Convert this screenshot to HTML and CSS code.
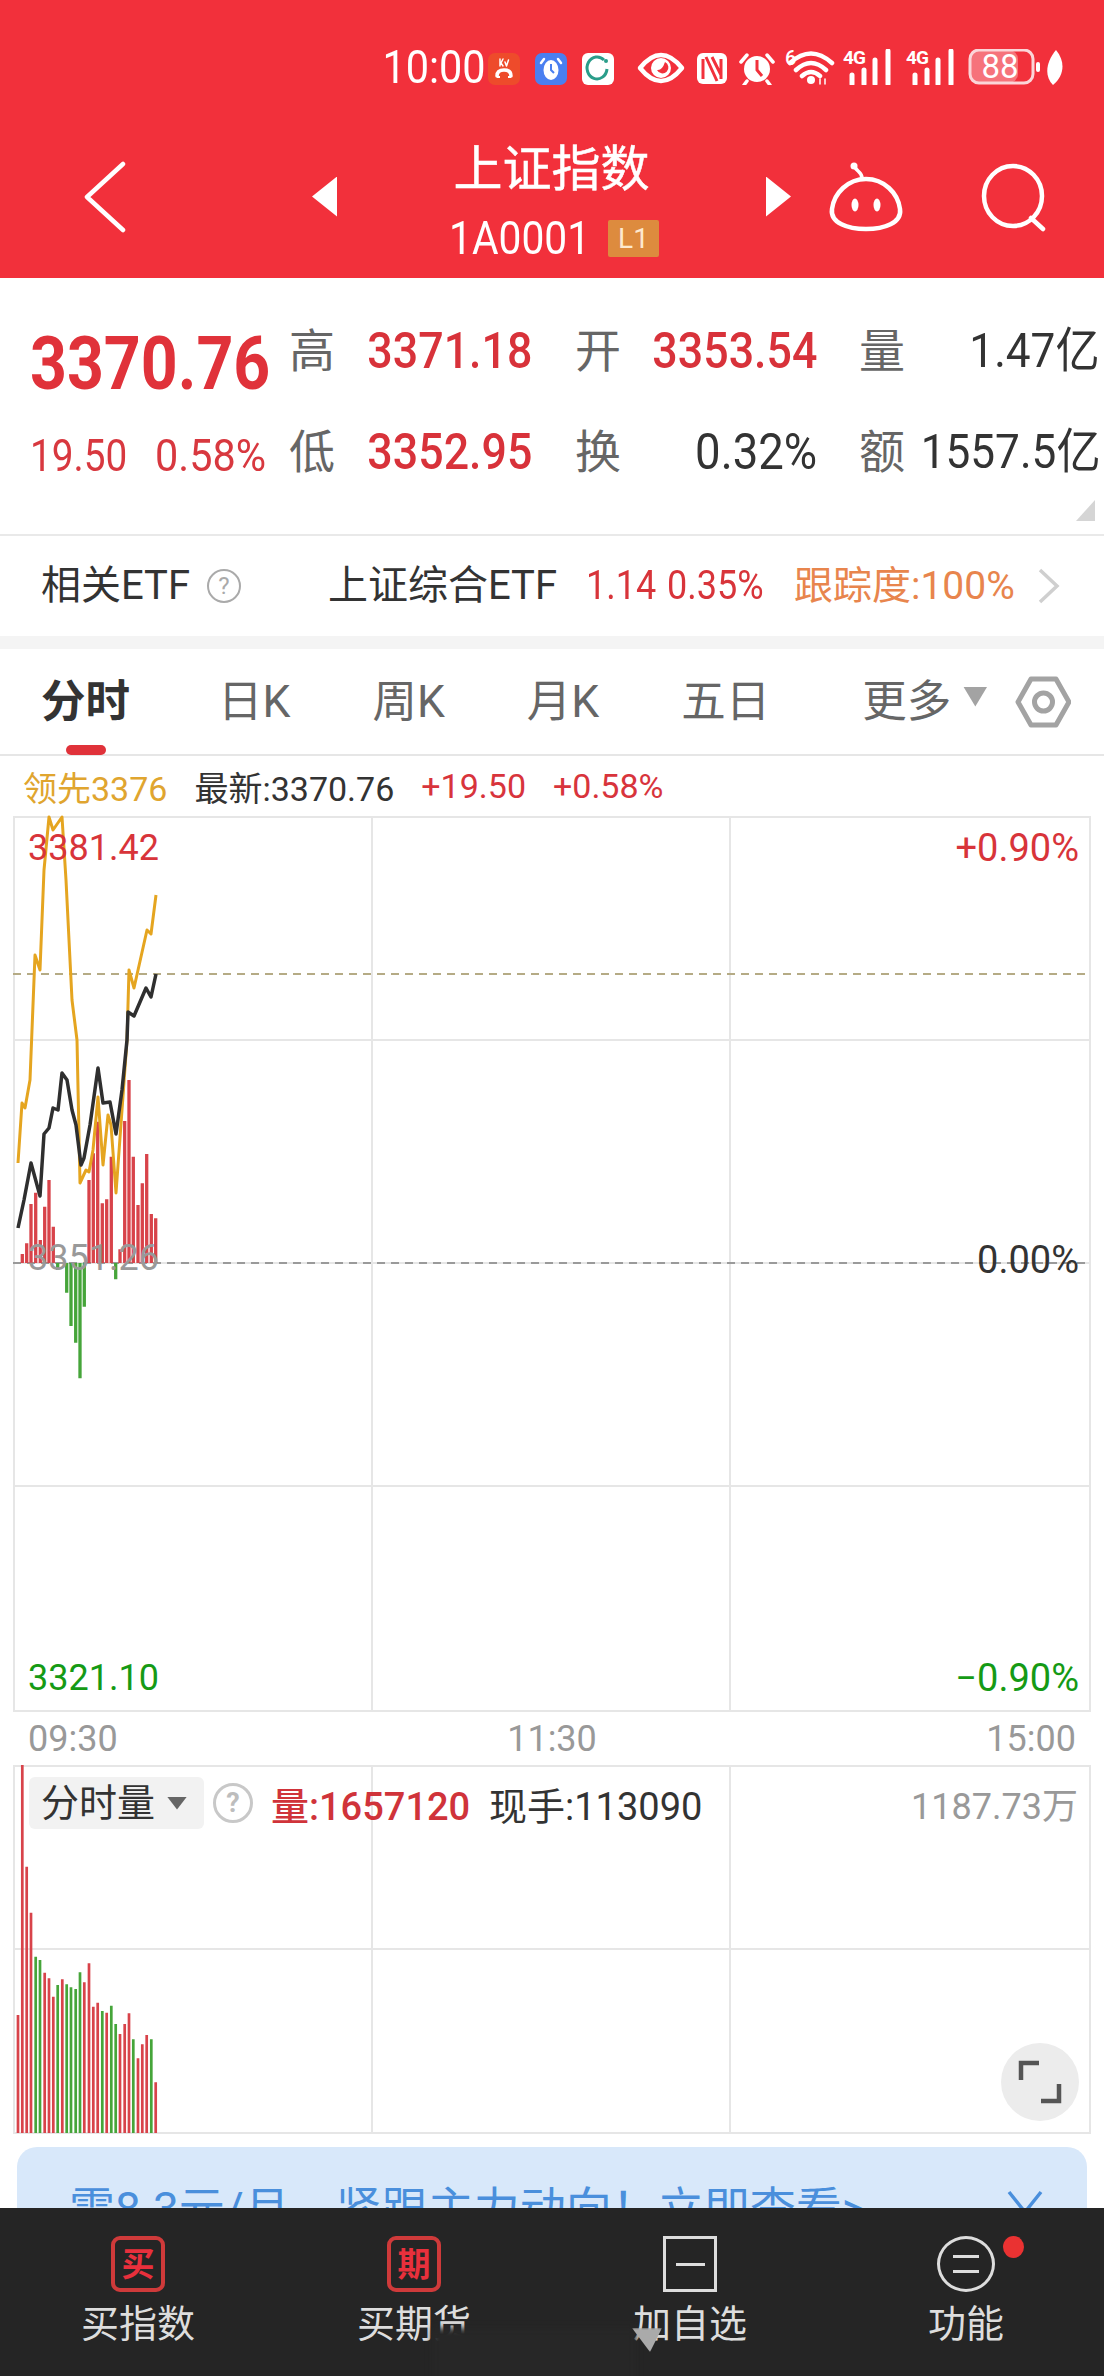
FILE: index.html
```html
<!DOCTYPE html>
<html lang="zh-CN">
<head>
<meta charset="utf-8">
<title>上证指数</title>
<link rel="stylesheet" href="styles.css">
</head>
<body>
<div class="page">
  <header class="top">
    <div class="status">
      <span class="time">10:00</span>
      <svg class="status-icons" width="575" height="36" viewBox="488 49 575 36">
        <rect x="488" y="53" width="32" height="32" rx="7" class="i-orange"/>
        <path d="M497 76q0-6 7-6t7 6" class="i-line-w3"/>
        <path d="M497 76v2h3v-2zM508 76v2h3v-2z" class="i-white"/>
        <path d="M500 59v7M503 59l-2 4 2 3M505 62l1.500 4 2-6" class="i-line-w1"/>
        <rect x="535" y="53" width="32" height="32" rx="7" class="i-blue"/>
        <ellipse cx="551" cy="70" rx="7.500" ry="10" class="i-white"/>
        <path d="M544 59l-3 4M558 59l3 4" class="i-line-w2"/>
        <path d="M551 64v6l3 3" class="i-line-blue"/>
        <rect x="582" y="53" width="32" height="32" rx="6" class="i-white"/>
        <path d="M604 60a10 11 0 1 0 3 9" class="i-teal"/>
        <circle cx="606" cy="61" r="2" class="i-teal-fill"/>
        <path d="M640 68Q661 42 682 68Q661 94 640 68Z" class="i-line-w4"/>
        <circle cx="661" cy="68" r="10" class="i-white"/>
        <path d="M665 62a6 6 0 1 1-8 8q5 1 8-8z" class="i-red"/>
        <rect x="697" y="53" width="30" height="31" rx="6" class="i-white"/>
        <path d="M703 59v20M721 59v20M706 57l11 24M712 57l9 18" class="i-line-red"/>
        <circle cx="757" cy="69" r="13" class="i-white"/>
        <path d="M741 62l6-7M773 62l-6-7M747 81l-3 4M767 81l3 4" class="i-line-w3"/>
        <path d="M757 60v10l5 6" class="i-line-red"/>
        <text x="785" y="65" class="t-six">6</text>
        <path d="M790 63Q811 44 832 63M796 70Q811 56 826 70M802 76Q811 68 820 76" class="i-line-w4"/>
        <circle cx="811" cy="80" r="4" class="i-white"/>
        <path d="M820 84v-5M825 84v-5" class="i-line-w1"/>
        <text x="843" y="64" class="t-4g">4G</text>
        <path d="M852 84v-9M864 84v-14M875 84v-24M888 84v-33" class="i-bar"/>
        <text x="906" y="64" class="t-4g">4G</text>
        <path d="M915 84v-9M927 84v-14M938 84v-24M951 84v-33" class="i-bar"/>
        <rect x="970" y="50" width="48" height="33" rx="9" class="i-batt-fill"/>
        <rect x="970" y="50" width="63" height="33" rx="9" class="i-batt"/>
        <text x="1000" y="78" class="t-batt">88</text>
        <rect x="1036" y="62" width="4" height="10" rx="2" class="i-white"/>
        <path d="M1056 50C1046 62 1044 76 1053 85C1064 76 1066 62 1056 50Z" class="i-white"/>
      </svg>
    </div>
    <nav class="nav">
      <svg class="nav-back" width="44" height="72" viewBox="83 160 44 72"><path d="M123 163L87 196L123 229" class="i-line-w5"/></svg>
      <span class="tri tri-left"></span>
      <div class="title-block">
        <h1 class="title">上证指数</h1>
        <div class="sub"><span class="code">1A0001</span><span class="level">L1</span></div>
      </div>
      <span class="tri tri-right"></span>
      <svg class="nav-robot" width="76" height="72" viewBox="828 162 76 72">
        <path d="M866 180C848 180 834 194 832 210C830 224 848 230 866 230C884 230 902 224 900 210C898 194 884 180 866 180Z" class="i-line-w4"/>
        <path d="M862 179C862 173 856 172 855 168" class="i-line-w3"/>
        <circle cx="854" cy="167" r="3.500" class="i-white"/>
        <ellipse cx="855" cy="206" rx="3.500" ry="6.500" class="i-white"/>
        <ellipse cx="877" cy="206" rx="3.500" ry="6.500" class="i-white"/>
      </svg>
      <svg class="nav-search" width="68" height="70" viewBox="978 164 68 70">
        <ellipse cx="1013" cy="198" rx="29" ry="30" class="i-line-w4"/>
        <path d="M1031 220L1043 231" class="i-line-w4"/>
      </svg>
    </nav>
  </header>

  <section class="quote">
    <div class="price"><span class="price-num">3370.76</span></div>
    <span class="lbl">高</span><span class="val"><b class="v v-red">3371.18</b></span>
    <span class="lbl">开</span><span class="val"><b class="v v-red">3353.54</b></span>
    <span class="lbl">量</span><span class="val"><b class="v v-dark">1.47亿</b></span>
    <div class="chg"><span class="chg-a">19.50</span><span class="chg-b">0.58%</span></div>
    <span class="lbl">低</span><span class="val"><b class="v v-red">3352.95</b></span>
    <span class="lbl">换</span><span class="val"><b class="v v-dark v-pct">0.32%</b></span>
    <span class="lbl">额</span><span class="val"><b class="v v-dark">1557.5亿</b></span>
    <span class="corner"></span>
  </section>

  <section class="etf">
    <span class="etf-name">相关ETF</span>
    <svg class="etf-q" width="36" height="36" viewBox="0 0 36 36"><circle cx="18" cy="18" r="16" class="q-ring"/><text x="18" y="26" class="q-mark">?</text></svg>
    <span class="etf-fund">上证综合ETF</span>
    <span class="etf-num etf-price">1.14</span>
    <span class="etf-num etf-rate">0.35%</span>
    <span class="etf-track">跟踪度:100%</span>
    <svg class="etf-more" width="22" height="36" viewBox="0 0 22 36"><path d="M2 2L19 18L2 34" class="q-chev"/></svg>
  </section>
  <div class="band"></div>

  <section class="tabs">
    <span class="tab tab-active">分时</span>
    <span class="tab">日K</span>
    <span class="tab">周K</span>
    <span class="tab">月K</span>
    <span class="tab">五日</span>
    <span class="tab tab-more">更多</span>
    <span class="tab-tri"></span>
    <svg class="hex" width="56" height="52" viewBox="1010 677 56 52">
      <path d="M1013 703L1026 680H1051L1064 703L1051 726H1026Z" class="hex-line"/>
      <circle cx="1038.500" cy="703" r="9" class="hex-line"/>
    </svg>
    <span class="tab-mark"></span>
  </section>

  <section class="readout">
    <span class="lead">领先3376</span>
    <span class="dark">最新:3370.76</span>
    <span class="red">+19.50</span>
    <span class="red">+0.58%</span>
  </section>

  <section class="chart">
    <div class="cell"></div><div class="cell"></div><div class="cell"></div>
    <div class="cell"></div><div class="cell"></div><div class="cell"></div>
    <div class="cell"></div><div class="cell"></div><div class="cell"></div>
    <div class="cell"></div><div class="cell"></div><div class="cell"></div>
    <svg class="plot" viewBox="13 816 1078 896">
      <path d="M13 974H1090" class="dash-tan"/>
      <path d="M13 1263H1090" class="dash-gray"/>
      <path class="bar-red" d="M22.300 1263V1254M26.700 1263V1243.300M31 1263V1204M35.700 1263V1192.700M40.300 1263V1240M44.700 1263V1206.700M49 1263V1180M53.300 1263V1226.700M89 1263V1180M93.300 1263V1153.300M97.700 1263V1121.700M102.300 1263V1203.300M106.700 1263V1199.300M111.300 1263V1156.700M120 1263V1249.300M124.700 1263V1121M129 1263V1080M133.300 1263V1156.700M138 1263V1205M142.300 1263V1183.300M146.700 1263V1154M151.300 1263V1214M155.700 1263V1218.300"/>
      <path class="bar-green" d="M57.700 1263V1270M66.700 1263V1292.700M71 1263V1326M75.700 1263V1342.700M80 1263V1378.300M84.300 1263V1306.700M115.700 1263V1279.300"/>
      <polyline class="line-gold" points="18,1163 22,1103 25,1108 30,1080 32,1030 35,955 40,970 44,870 49,817 53,830 62,817 66,880 72,1000 77,1040 80,1183 86,1170 89,1172 93,1150 98,1097 103,1165 108,1115 111,1125 116,1193 122,1110 127,1040 129,970 134,988 147,930 151,934 156,895"/>
      <polyline class="line-black" points="18,1228 24,1200 31,1163 40,1196 44,1134 49,1128 53,1108 58,1110 62,1073 67,1080 72,1110 76,1125 81,1165 84,1158 90,1125 98,1068 103,1103 110,1102 116,1134 122,1090 127,1040 128,1012 134,1016 146,988 151,997 156,974"/>
    </svg>
    <span class="axis ax-top-l">3381.42</span>
    <span class="axis ax-top-r">+0.90%</span>
    <span class="axis ax-mid-l">3351.26</span>
    <span class="axis ax-mid-r">0.00%</span>
    <span class="axis ax-bot-l">3321.10</span>
    <span class="axis ax-bot-r">−0.90%</span>
  </section>

  <section class="times"><span>09:30</span><span>11:30</span><span>15:00</span></section>

  <section class="volume">
    <div class="cell"></div><div class="cell"></div><div class="cell"></div>
    <div class="cell"></div><div class="cell"></div><div class="cell"></div>
    <svg class="plot" viewBox="13 1765 1078 369">
      <path class="vbar-red" d="M18 2133V2015M22.300 2133V1765M26.700 2133V1866.700M31 2133V1912.700M44.700 2133V1972.700M49 2133V1978.300M53.300 2133V1996.700M62.300 2133V1979.300M84.300 2133V1982.300M89 2133V1963.300M93.300 2133V2006.700M97.700 2133V2002.700M106.700 2133V2012.700M120 2133V2034M124.700 2133V2024M129 2133V2013.300M138 2133V2058.300M142.300 2133V2044.300M146.700 2133V2035M155.700 2133V2082.300"/>
      <path class="vbar-green" d="M35.700 2133V1956.700M40 2133V1960M57.700 2133V1985M66.700 2133V1984.300M71 2133V1987.300M75.700 2133V1989M80 2133V1972.300M102.300 2133V2011M111.300 2133V2005.700M115.700 2133V2024M133.300 2133V2039.300M151.300 2133V2039.300"/>
    </svg>
    <div class="vol-head">
      <span class="chip">分时量<i class="chip-tri"></i></span>
      <svg class="vol-q" width="42" height="42" viewBox="0 0 42 42"><circle cx="21" cy="21" r="18.500" class="q-ring-b"/><text x="21" y="30" class="q-mark-b">?</text></svg>
      <span class="vol-now">量:1657120</span>
      <span class="vol-hand">现手:113090</span>
      <span class="vol-max">1187.73万</span>
    </div>
    <div class="expand">
      <svg width="44" height="44" viewBox="0 0 44 44"><path d="M3 20V3H21M41 24V41H23" class="expand-line"/></svg>
    </div>
  </section>

  <aside class="banner">
    <span class="banner-text">需8.3元/月，紧跟主力动向！立即查看&gt;</span>
    <svg class="banner-x" width="36" height="30" viewBox="0 0 36 30"><path d="M2 2L18 22L34 2M18 22V30" class="banner-line"/></svg>
  </aside>

  <footer class="bottom">
    <div class="item">
      <span class="box box-red">买</span>
      <span class="item-label">买指数</span>
    </div>
    <div class="item">
      <span class="box box-red box-up">期</span>
      <span class="item-label">买期货</span>
    </div>
    <div class="item">
      <span class="box box-plain"><i class="dash"></i></span>
      <span class="item-label">加自选</span>
    </div>
    <div class="item">
      <span class="circle"><i class="dash-s"></i><i class="dash-s"></i><i class="dot"></i></span>
      <span class="item-label">功能</span>
    </div>
    <div class="smudge"></div>
    <div class="smudge-tip"></div>
  </footer>
</div>
</body>
</html>
```

FILE: styles.css
```css
* { box-sizing: border-box; }
html, body { margin: 0; padding: 0; background: #fff; }
body { font-family: Roboto, "Noto Sans CJK SC", sans-serif; color: #333; }
.page { position: relative; width: 1104px; height: 2376px; overflow: hidden; background: #fff; }
i, b { font-style: normal; font-weight: inherit; }

/* header */
.top { height: 278px; background: #f2303b; color: #fff; padding-top: 49px; }
.status { display: flex; justify-content: flex-end; align-items: center; gap: 12px; height: 36px; padding-right: 41px; }
.status-icons { display: block; flex: none; }
.time { width: 104px; font-size: 46px; line-height: 36px; white-space: nowrap; transform: scaleX(.9); transform-origin: right center; text-align: right; direction: ltr; }
.i-white { fill: #fff; }
.i-orange { fill: #ee4b2b; }
.i-blue { fill: #4a7ff0; }
.i-red { fill: #f2303b; }
.i-teal { fill: none; stroke: #2a9d8a; stroke-width: 3; }
.i-teal-fill { fill: #2a9d8a; }
.i-line-w1, .i-line-w2, .i-line-w3, .i-line-w4, .i-line-w5 { fill: none; stroke: #fff; stroke-linecap: round; stroke-linejoin: round; }
.i-line-w1 { stroke-width: 1.500; }
.i-line-w2 { stroke-width: 2.500; }
.i-line-w3 { stroke-width: 3.500; }
.i-line-w4 { stroke-width: 4.500; }
.i-line-w5 { stroke-width: 4.500; }
.i-line-blue { fill: none; stroke: #4a7ff0; stroke-width: 2; }
.i-line-red { fill: none; stroke: #f2303b; stroke-width: 3; }
.i-bar { fill: none; stroke: #fff; stroke-width: 5; stroke-linecap: round; }
.i-batt { fill: none; stroke: #fbd5d8; stroke-width: 3; }
.i-batt-fill { fill: #f6737b; }
.t-six { fill: #fff; font-size: 20px; font-weight: 500; }
.t-4g { fill: #fff; font-size: 19px; font-weight: 700; letter-spacing: -1px; }
.t-batt { fill: #fff; font-size: 33px; text-anchor: middle; }

.nav { display: flex; align-items: center; margin-top: 57px; height: 115px; padding-left: 83px; }
.nav-back { flex: none; display: block; margin-top: -6px; }
.tri { flex: none; width: 25px; height: 40px; background: #fff; }
.tri-left { margin-left: 185px; margin-top: -6px; clip-path: polygon(100% 0, 100% 100%, 0 50%); }
.tri-right { margin-top: -6px; clip-path: polygon(0 0, 100% 50%, 0 100%); }
.title-block { flex: none; width: 429px; display: flex; flex-direction: column; align-items: center; }
.title { margin: 0; font-size: 49px; line-height: 56px; font-weight: 400; -webkit-text-stroke: .5px #fff; }
.sub { display: flex; align-items: center; height: 37px; margin-top: 22px; padding-left: 5px; }
.code { width: 141px; font-size: 46px; line-height: 37px; white-space: nowrap; transform: scaleX(.886); transform-origin: left center; }
.level { width: 51px; height: 37px; margin-left: 18px; background: #dd8b3e; color: #fde9cf; font-size: 28px; line-height: 37px; text-align: center; border-radius: 2px; }
.nav-robot { flex: none; display: block; margin-left: 37px; margin-top: -6px; }
.nav-search { flex: none; display: block; margin-left: 74px; margin-top: -6px; }

/* quote */
.quote { position: relative; height: 258px; padding: 22px 4px 0 30px; border-bottom: 2px solid #e9e9e9; display: grid;
  grid-template-columns: 259px 45px 198px 43px 45px 197px 42px 46px 195px; grid-template-rows: 101px 101px; align-items: center; }
.lbl { grid-column: auto; font-size: 46px; line-height: 50px; color: #666; }
.lbl:nth-of-type(n) { width: 46px; }
.val { display: block; text-align: right; white-space: nowrap; }
.quote > .lbl:nth-child(4), .quote > .lbl:nth-child(11) { grid-column: 5; }
.quote > .lbl:nth-child(6), .quote > .lbl:nth-child(13) { grid-column: 8; }
.v { display: inline-block; font-size: 50px; line-height: 50px; transform: scaleX(.895); transform-origin: right center; }
.v-red { color: #d8323a; font-weight: 500; }
.v-dark { color: #333; font-size: 48px; transform: scaleX(.92); }
.v-pct { font-size: 50px; transform: scaleX(.91); }
.price { padding-top: 26px; color: #e0323a; white-space: nowrap; }
.price-num { display: inline-block; font-size: 74px; line-height: 74px; font-weight: 700; transform: scaleX(.87); transform-origin: left center; }
.chg { display: flex; padding-top: 8px; color: #d8383f; white-space: nowrap; }
.chg-a, .chg-b { display: block; font-size: 45px; line-height: 50px; transform-origin: left center; }
.chg-a { width: 125px; transform: scaleX(.86); }
.chg-b { transform: scaleX(.92); }
.corner { position: absolute; left: 1076px; top: 222px; width: 19px; height: 21px; background: #d5d5d5; clip-path: polygon(100% 0, 100% 100%, 0 100%); }

/* etf */
.etf { display: flex; align-items: center; height: 100px; padding-left: 41px; white-space: nowrap; }
.etf-name, .etf-fund { font-size: 40px; line-height: 44px; color: #333; }
.etf-name { width: 148px; }
.etf-q { display: block; flex: none; margin-left: 17px; }
.q-ring { fill: none; stroke: #aaa; stroke-width: 2; }
.q-mark { fill: #aaa; font-size: 24px; text-anchor: middle; }
.etf-fund { width: 228px; margin-left: 86px; }
.etf-num { display: block; font-size: 40px; line-height: 44px; color: #d8343a; transform: scaleX(.9); transform-origin: left center; }
.etf-price { width: 81px; margin-left: 30px; }
.etf-rate { width: 127px; }
.etf-track { width: 244px; font-size: 39px; line-height: 44px; color: #e8854d; }
.etf-more { display: block; flex: none; }
.q-chev { fill: none; stroke: #cfcfcf; stroke-width: 3.500; }
.band { height: 13px; background: #f4f4f4; }

/* tabs */
.tabs { position: relative; display: flex; align-items: center; gap: 82px; height: 107px; padding-left: 41px; border-bottom: 2px solid #e6e6e6; }
.tab { font-size: 44.500px; line-height: 50px; color: #666; white-space: nowrap; }
.tab-active { color: #333; font-weight: 700; margin-right: 6px; }
.tab-more { margin-left: 10px; }
.tab-tri { width: 24px; height: 20px; margin: -10px 0 0 -70px; background: #a3a3a3; clip-path: polygon(0 0, 100% 0, 50% 100%); }
.hex { display: block; flex: none; margin-left: -54px; }
.hex-line { fill: none; stroke: #a3a3a3; stroke-width: 5; stroke-linejoin: round; }
.tab-mark { position: absolute; left: 66px; bottom: -1px; width: 40px; height: 10px; border-radius: 5px; background: #e0323a; }

/* readout */
.readout { display: flex; align-items: center; gap: 27px; height: 60px; padding-left: 23px; font-size: 34px; white-space: nowrap; }
.lead { color: #e0a52f; }
.dark { color: #333; }
.red { color: #d8343c; }

/* chart grids */
.chart, .volume { position: relative; display: grid; grid-template-columns: repeat(3, 1fr); margin-left: 13px; width: 1078px; border: 2px solid #e6e6e6; }
.chart { height: 896px; grid-template-rows: repeat(4, 1fr); }
.volume { height: 369px; grid-template-rows: repeat(2, 1fr); }
.cell { border-right: 2px solid #e6e6e6; border-bottom: 2px solid #e6e6e6; }
.cell:nth-child(3n) { border-right: 0; }
.chart .cell:nth-child(n+10), .volume .cell:nth-child(n+4) { border-bottom: 0; }
.plot { position: absolute; left: -2px; top: -2px; width: 1078px; height: 100%; overflow: visible; }
.chart .plot { height: 896px; }
.volume .plot { height: 369px; }
.dash-tan, .dash-gray { fill: none; stroke-width: 2; stroke-dasharray: 8 6; }
.dash-tan { stroke: #b5ab85; }
.dash-gray { stroke: #9a9a9a; }
.bar-red, .bar-green, .vbar-red, .vbar-green { fill: none; }
.bar-red, .bar-green { stroke-width: 3.300; }
.vbar-red, .vbar-green { stroke-width: 2.700; }
.bar-red, .vbar-red { stroke: #d8434a; }
.bar-green, .vbar-green { stroke: #46a53a; }
.line-gold, .line-black { fill: none; stroke-linejoin: round; }
.line-gold { stroke: #e5a520; stroke-width: 3; }
.line-black { stroke: #2f2f2f; stroke-width: 3.500; }

.axis { position: absolute; font-size: 36px; line-height: 40px; white-space: nowrap; }
.ax-top-l, .ax-mid-l, .ax-bot-l { left: 13px; }
.ax-top-r, .ax-mid-r, .ax-bot-r { right: 10px; font-size: 38px; }
.ax-top-l, .ax-top-r { top: 10px; color: #d8343a; }
.ax-mid-l { top: 420px; color: #999; }
.ax-mid-r { top: 422px; color: #333; }
.ax-bot-l, .ax-bot-r { bottom: 12px; color: #159a15; }

.times { display: flex; justify-content: space-between; align-items: center; height: 53px; padding: 0 28px; font-size: 36px; color: #999; }

/* volume header */
.vol-head { position: absolute; left: 14px; right: 11px; top: 10px; display: flex; align-items: center; height: 52px; white-space: nowrap; }
.chip { display: flex; align-items: center; width: 175px; height: 52px; padding-left: 12px; background: #f2f2f2; border-radius: 6px; font-size: 38px; line-height: 52px; color: #333; }
.chip-tri { width: 20px; height: 13px; margin-left: 12px; background: #666; clip-path: polygon(0 0, 100% 0, 50% 100%); }
.vol-q { display: block; flex: none; margin-left: 8px; }
.q-ring-b { fill: none; stroke: #c8c8c8; stroke-width: 3; }
.q-mark-b { fill: #bdbdbd; font-size: 27px; font-weight: 700; text-anchor: middle; }
.vol-now { width: 218px; margin-left: 17px; font-size: 38px; font-weight: 500; color: #d0333a; }
.vol-hand { font-size: 38px; color: #333; }
.vol-max { margin-left: auto; font-size: 36px; color: #999; }
.expand { position: absolute; right: 10px; bottom: 11px; display: flex; align-items: center; justify-content: center; width: 78px; height: 78px; border-radius: 50%; background: #ececec; }
.expand svg { display: block; }
.expand-line { fill: none; stroke: #555; stroke-width: 4.500; }

/* banner */
.banner { display: flex; justify-content: space-between; width: 1070px; height: 160px; margin: 13px 0 0 17px; padding: 37px 44px 0 52px; background: #d8e8fa; border-radius: 20px; color: #4a8fdc; }
.banner-text { font-size: 46px; line-height: 50px; white-space: nowrap; }
.banner-x { display: block; flex: none; margin-top: 6px; }
.banner-line { fill: none; stroke: #4a8fdc; stroke-width: 3.500; }

/* bottom bar */
.bottom { position: absolute; left: 0; right: 0; bottom: 0; height: 168px; background: #252525; display: grid; grid-template-columns: repeat(4, 1fr); padding-top: 28px; overflow: hidden; }
.item { display: flex; flex-direction: column; align-items: center; gap: 13px; }
.item-label { font-size: 38px; line-height: 38px; color: #ddd; white-space: nowrap; }
.box { display: flex; align-items: center; justify-content: center; width: 54px; height: 56px; }
.box-red { border: 4px solid #cf3a3a; border-radius: 9px; color: #e8303c; font-size: 33px; font-weight: 700; line-height: 1; }
.box-plain { border: 3px solid #ddd; }
.dash { display: block; width: 29px; height: 3px; background: #ddd; }
.circle { position: relative; display: flex; flex-direction: column; align-items: center; justify-content: center; gap: 12px; width: 58px; height: 56px; border: 3px solid #ddd; border-radius: 50%; }
.dash-s { display: block; width: 26px; height: 3px; background: #ddd; }
.dot { position: absolute; left: 63px; top: -3px; width: 21px; height: 22px; border-radius: 50%; background: #ea3232; }
.smudge { position: absolute; left: 432px; top: 120px; width: 204px; height: 60px; background: #272727; filter: blur(3px); }
.smudge-tip { position: absolute; left: 632px; top: 120px; width: 30px; height: 24px; background: #aaa; clip-path: polygon(0 0, 100% 0, 60% 100%); filter: blur(1px); }
```
